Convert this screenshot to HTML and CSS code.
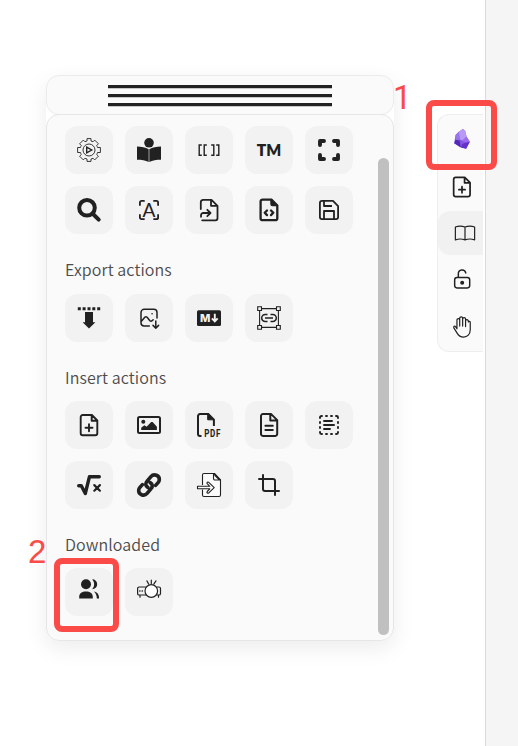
FILE: index.html
```html
<!DOCTYPE html>
<html lang="en">
<head>
<meta charset="utf-8">
<title>Excalidraw tools panel</title>
<link rel="stylesheet" href="styles.css">
</head>
<body>
<main class="canvas">
  <section class="panel">
    <header class="handle"><i></i><i></i><i></i></header>
    <div class="panel-body">
      <div class="sections">
        <div class="grid">
          <button class="tool" aria-label="Run script"><svg viewBox="0 0 24 24" fill="none" stroke="currentColor" stroke-width=".9"><path d="M10 .6h4v2.400q1 .2 2 .8l1.700-1.700 3.700 3.700L19.700 7.500q.6 1 .8 2h2.900v5h-2.900q-.2 1-.8 2l1.700 1.700-3.700 3.700-1.700-1.700q-1 .6-2 .8v2.400h-4V21q-1-.2-2-.8l-1.700 1.700-3.700-3.700 1.700-1.700q-.6-1-.8-2H.6v-5h2.900q.2-1 .8-2L2.600 5.800l3.700-3.700L8 3.800q1-.6 2-.8z"/><circle cx="12" cy="12" r="6"/><path d="m9.700 9.200 5 2.800-5 2.800z" stroke-width="1.400"/></svg></button>
          <button class="tool" aria-label="Reader"><svg viewBox="0 0 24 24"><circle cx="12" cy="4.800" r="4.800"/><path d="M0 8.500c4.500 0 8.500.8 11.700 2.800V24C8.500 22.300 4.500 21.700 0 21.700zM24 8.500c-4.500 0-8.500.8-11.700 2.800V24c3.200-1.700 7.200-2.300 11.700-2.300z"/></svg></button>
          <button class="tool" aria-label="Link brackets"><svg viewBox="0 0 24 24" fill="none" stroke="currentColor" stroke-width="1.400"><path d="M4.800 7H2.200v10.200h2.600M9.800 7H7.200v10.200h2.600M14.200 7h2.600v10.200h-2.600M19.200 7h2.600v10.200h-2.600"/></svg></button>
          <button class="tool" aria-label="Trademark"><svg viewBox="0 0 24 24"><text class="glyph-tm" x="12" y="18" text-anchor="middle" textLength="24.500" lengthAdjust="spacingAndGlyphs">TM</text></svg></button>
          <button class="tool" aria-label="Fullscreen"><svg viewBox="0 0 24 24" fill="none" stroke="currentColor" stroke-width="3.900" stroke-linecap="round" stroke-linejoin="round"><path d="M7 3H3v4M17 3h4v4M3 17v4h4M21 17v4h-4"/></svg></button>
          <button class="tool" aria-label="Search"><svg viewBox="0 0 24 24" fill="none" stroke="currentColor" stroke-width="4" stroke-linecap="round"><circle cx="10" cy="9.800" r="7.800"/><path d="m15.500 15.500 6.200 6.200"/></svg></button>
          <button class="tool" aria-label="Scan text"><svg viewBox="0 0 24 24" fill="none" stroke="currentColor" stroke-width="1.800" stroke-linecap="round"><path d="M7 2.900H4.600a1.700 1.700 0 0 0-1.700 1.700V7M17 2.900h2.400a1.700 1.700 0 0 1 1.700 1.700V7M7 21.100H4.600a1.700 1.700 0 0 1-1.700-1.700V17M17 21.100h2.400a1.700 1.700 0 0 0 1.700-1.700V17"/><text class="glyph-a" x="12" y="18.600" text-anchor="middle">A</text></svg></button>
          <button class="tool" aria-label="Open file"><svg viewBox="0 0 24 24" fill="none" stroke="currentColor" stroke-width="1.800" stroke-linecap="round" stroke-linejoin="round"><path d="M3.800 11V4.200a2.400 2.400 0 0 1 2.400-2.400h8.300l6 6v12.500a2 2 0 0 1-2 2H5.200M14 2v5.800h6M4 18.800v-1.500a2.300 2.300 0 0 1 2.300-2.300H13M10.300 11.800l3.200 3.200-3.200 3.200"/></svg></button>
          <button class="tool" aria-label="Code file"><svg viewBox="0 0 24 24" fill="none" stroke="currentColor" stroke-width="2.300" stroke-linecap="round" stroke-linejoin="round"><path d="M5.600 1.600h8.800l5.900 5.900v12.700a2 2 0 0 1-2 2H5.600a2 2 0 0 1-2-2V3.600a2 2 0 0 1 2-2z"/><path d="M14 1.600v4.500a1.500 1.500 0 0 0 1.500 1.500h4.800z" fill="currentColor" stroke-width="1.500"/><path d="m10 12.500-2.300 2.300 2.300 2.300M14 12.500l2.300 2.300-2.300 2.300"/></svg></button>
          <button class="tool" aria-label="Save"><svg viewBox="0 0 24 24" fill="none" stroke="currentColor" stroke-width="1.800" stroke-linejoin="round"><path d="M5 2.900h11l5.100 5.200V19a2.100 2.100 0 0 1-2.100 2.100H5A2.100 2.100 0 0 1 2.900 19V5A2.100 2.100 0 0 1 5 2.900zM7 3v5h8M7 21v-8h10v8"/></svg></button>
        </div>
        <h2 class="first">Export actions</h2>
        <div class="grid">
          <button class="tool" aria-label="Download"><svg viewBox="0 0 24 24"><path d="M.8 1.300h3v3h-3zM5.600 1.300h3v3h-3zM10.500 1.300h3v3h-3zM15.300 1.300h3v3h-3zM20.200 1.300h3v3h-3zM8 6h8v10.200h2.400L12 22.500l-6.400-6.300H8z"/></svg></button>
          <button class="tool" aria-label="Export image"><svg viewBox="0 0 24 24" fill="none" stroke="currentColor" stroke-width="1.500" stroke-linecap="round" stroke-linejoin="round"><path d="M12.300 20H7.200A3.200 3.200 0 0 1 4 16.800V6.500a3.200 3.200 0 0 1 3.200-3.200h9.600A3.200 3.200 0 0 1 20 6.500V12M4.200 15.600l3.600-4.300q1.100-1.200 2.300 0l2.800 3.400q1 1 2.200 0l1-1M18.800 15v7M16 19.400l2.800 2.800 2.800-2.800"/><path d="M15 7.700h.1"/></svg></button>
          <button class="tool" aria-label="Markdown"><svg viewBox="0 0 24 24"><rect y="4.300" width="24" height="15.600" rx="1.500"/><text class="glyph-md" x="3" y="16">M</text><path d="M17.800 7.800v7M14.900 12.300l2.900 3.100 2.900-3.100" fill="none" stroke="#f2f2f2" stroke-width="1.900"/></svg></button>
          <button class="tool" aria-label="Frame link"><svg viewBox="0 0 24 24" fill="none" stroke="currentColor" stroke-width="1.100"><path d="M4.700 2.600h14.600M4.700 21.400h14.600M2.600 4.700v14.600M21.400 4.700v14.600"/><path d="M.7.700h3.800v3.800H.7zM19.500.7h3.800v3.800h-3.800zM.7 19.500h3.800v3.800H.7zM19.500 19.500h3.800v3.800h-3.800z"/><path d="M10.500 8.500H8.200a3.500 3.500 0 0 0 0 7h2.300M13.500 8.500h2.300a3.500 3.500 0 0 1 0 7h-2.300M8 12h8" stroke-width="1.500"/></svg></button>
        </div>
        <h2>Insert actions</h2>
        <div class="grid">
          <button class="tool" aria-label="New file"><svg viewBox="0 0 24 24" fill="none" stroke="currentColor" stroke-width="1.900" stroke-linecap="round" stroke-linejoin="round"><path d="M5.700 2h9.200l5.400 5.500v12.700a2 2 0 0 1-2 2H5.700a2 2 0 0 1-2-2V4a2 2 0 0 1 2-2zM14.700 2.200v5.500h5.400M12 11.200v7M8.500 14.700h7"/></svg></button>
          <button class="tool" aria-label="Insert image"><svg viewBox="0 0 24 24"><rect x="1" y="4" width="22" height="16" rx="1.500" fill="none" stroke="currentColor" stroke-width="2"/><circle cx="6.300" cy="8.800" r="2"/><path d="M4.200 17v-2.300l3.200-2.400 2.200 1.500 4.600-4.800h1.400l4.300 4.700V17z"/></svg></button>
          <button class="tool" aria-label="Insert PDF"><svg viewBox="0 0 24 24"><path d="M4.500 22.900H3A2 2 0 0 1 1 20.900V3.100A2 2 0 0 1 3 1.100h8.300l5.600 5.600V13" fill="none" stroke="currentColor" stroke-width="2"/><path d="M10.700 1v5.800h6.200z" stroke="currentColor"/><text class="glyph-pdf" x="7.200" y="23.800" textLength="17" lengthAdjust="spacingAndGlyphs">PDF</text></svg></button>
          <button class="tool" aria-label="Insert note"><svg viewBox="0 0 24 24" fill="none" stroke="currentColor" stroke-width="2" stroke-linecap="round" stroke-linejoin="round"><path d="M6 1.100h8.200l6 6v14a1.800 1.800 0 0 1-1.800 1.800H5.800A1.800 1.800 0 0 1 4 21.100V3a1.900 1.900 0 0 1 2-1.900zM13.300 1.300v6.200h6.500M8.400 12.800h7.400M8.400 16.900h7.400"/></svg></button>
          <button class="tool" aria-label="Text selection"><svg viewBox="0 0 24 24" fill="none" stroke="currentColor" stroke-width="1.900" stroke-linecap="round"><path d="M5 3h-.5A1.500 1.500 0 0 0 3 4.500V5M9 3h1M14 3h1M19 3h.5A1.500 1.500 0 0 1 21 4.500V5M21 9v1M21 14v1M21 19v.5a1.500 1.500 0 0 1-1.500 1.500H19M15 21h-1M10 21H9M5 21h-.5A1.500 1.500 0 0 1 3 19.500V19M3 15v-1M3 10V9M7 8h8M7 12h10M7 16h6"/></svg></button>
          <button class="tool" aria-label="Formula"><svg viewBox="0 0 24 24" fill="none" stroke="currentColor" stroke-linecap="round" stroke-linejoin="round"><path d="M1.700 12.800h2.600l4 7.700 4.100-16.700h9.900" stroke-width="3.400"/><path d="m17.300 12.100 5.600 5.600M22.900 12.100l-5.600 5.600" stroke-width="2.200"/></svg></button>
          <button class="tool" aria-label="Insert link"><svg viewBox="0 0 24 24" fill="none" stroke="currentColor" stroke-width="3.600" stroke-linecap="round"><path d="M10.800 14.400c-2.500-1.500-2.700-4.100-.9-6l4-4.800c3.100-3.500 8.800-1.100 8.400 3.200-.1 1.200-.5 2-1.200 2.800l-2.500 2.800M13.200 9.600c2.500 1.500 2.700 4.100.9 6l-4 4.800C7 23.900 1.300 21.500 1.700 17.200c.1-1.200.5-2 1.200-2.800l2.500-2.800"/></svg></button>
          <button class="tool" aria-label="Import file"><svg viewBox="0 0 24 24" fill="none" stroke="currentColor" stroke-width="1.100" stroke-linejoin="round"><path d="M5.500 12V2a1.500 1.500 0 0 1 1.500-1.500h10.500l6 6.300V22a1.500 1.500 0 0 1-1.500 1.500H7A1.500 1.500 0 0 1 5.500 22v-5.500" fill="#fafafa"/><path d="M16.500.7v4.800a1.500 1.500 0 0 0 1.500 1.500h5.300zM17.500 2l5 5"/><path d="M.5 13.300h12.300l-2.600-2.600a1 1 0 0 1 1.600-1.300l5.400 5.200-5.400 5.200a1 1 0 0 1-1.600-1.300l2.600-2.700H.5z" fill="#fafafa"/></svg></button>
          <button class="tool" aria-label="Crop"><svg viewBox="0 0 24 24" fill="none" stroke="currentColor" stroke-width="2" stroke-linecap="round" stroke-linejoin="round"><path d="M6 2v14a2 2 0 0 0 2 2h14M18 22V8a2 2 0 0 0-2-2H2"/></svg></button>
        </div>
        <h2>Downloaded</h2>
        <div class="grid">
          <button class="tool" aria-label="Collaborate"><svg viewBox="0 0 24 24"><circle cx="9" cy="4.200" r="5"/><path d="M2.200 18.500v-1.700c0-3.700 3-5.300 6.800-5.300s6.800 1.600 6.800 5.300v1.700zM15.200-.8a5 5 0 0 1 0 10c1.500-2 1.900-3.300 1.900-5s-.4-3-1.900-5zM16.800 11.600c3.300.5 5.300 2.700 5.300 6.900h-2.300c0-3-1-5.200-3-6.900z"/></svg></button>
          <button class="tool" aria-label="Presentation"><svg viewBox="0 0 24 24" fill="none" stroke="currentColor" stroke-width="1.200" stroke-linecap="round"><path d="M8.500 7H2.200A1.600 1.600 0 0 0 .6 8.600v4.800A1.600 1.600 0 0 0 2.200 15h6.300M3 15v2.200M21.500 15v2.200M20 7h1.900a1.600 1.600 0 0 1 1.600 1.600v4.800a1.600 1.600 0 0 1-1.600 1.600H20"/><circle cx="14.300" cy="11" r="6.300" fill="#fff"/><path d="M14.300 3.500V.2M11.800 4.200 9.900.9M16.800 4.200 19 .9"/><path d="M2.800 11h3.800" stroke-width="1.600" stroke-dasharray=".1 2.300"/></svg></button>
        </div>
      </div>
      <div class="scrollbar"><div class="thumb"></div></div>
    </div>
  </section>
  <nav class="dock">
    <button class="dock-item" aria-label="Obsidian"><svg viewBox="0 0 24 24"><path d="m5 7.500 3.500-3.500L13 1.200l2.500 2 1.500 6.300 3.500 5.500-4 7.500-6.500-1.500-6.500-4.500z" fill="#8355e1"/><path d="m8.500 4 4.500-2.800 2.500 2 1.500 6.300-4.500 4-3-1z" fill="#b799f6"/><path d="m9.500 12.500 3 1 4.500-4 3.500 5.500-5 1z" fill="#9b6dee"/><path d="m3.500 16.500 1.500-4 4.500 1.500 1 7z" fill="#5528b8"/><path d="m12 18 3.500-2 5-1-4 7.500-5.500-1.200z" fill="#6531c9"/><path d="M5 7.500 8.500 4l1 8.500-4.500.5z" fill="#9974ea"/></svg></button>
    <button class="dock-item" aria-label="New drawing"><svg viewBox="0 0 24 24" fill="none" stroke="currentColor" stroke-width="1.900" stroke-linecap="round" stroke-linejoin="round"><path d="M5.200 1.500H15l5.800 5.800v12.900a2.300 2.300 0 0 1-2.300 2.300H5.200a2.300 2.300 0 0 1-2.300-2.300V3.800a2.300 2.300 0 0 1 2.300-2.300zM14.800 1.700v5.700h5.800M12 11.500v6.800M8.600 14.900h6.800"/></svg></button>
    <button class="dock-item active" aria-label="Library"><svg viewBox="0 0 24 24" fill="none" stroke="currentColor" stroke-width="1.300" stroke-linecap="round" stroke-linejoin="round"><path d="M1.500 19.500c3.500-1.300 7-1.300 10.500 0 3.500-1.300 7-1.300 10.500 0v-14c-3.500-1.300-7-1.300-10.500 0-3.500-1.300-7-1.300-10.500 0zM12 5.500v14"/></svg></button>
    <button class="dock-item" aria-label="Lock"><svg viewBox="0 0 24 24" fill="none" stroke="currentColor" stroke-width="1.600" stroke-linecap="round"><rect x="4" y="10.400" width="16.400" height="11.300" rx="2.500"/><path d="M8 10V6.400a4.100 4.100 0 0 1 8.100-1"/><circle cx="12.200" cy="16" r="1.400" fill="currentColor"/></svg></button>
    <button class="dock-item" aria-label="Pan"><svg viewBox="0 0 24 24" fill="none" stroke="currentColor" stroke-width="1.300" stroke-linecap="round" stroke-linejoin="round"><path d="M6.500 14V4.300a1.500 1.500 0 0 1 3 0V11M9.500 11V2.500a1.500 1.500 0 0 1 3.200 0V11M12.700 11V3.300a1.500 1.500 0 0 1 3.200 0V11M15.900 11.500V5.500a1.500 1.500 0 0 1 3 0v1a1.100 1.100 0 0 1 2.100.5V15c0 5-3.200 8-7.200 8-3.600 0-5.600-1.500-7.300-4.600L3.100 13c-.7-1.800.9-2.500 2-1.200l1.400 1.900"/></svg></button>
  </nav>
</main>
<aside class="gutter"></aside>
<div class="mark mark-one"></div>
<span class="num num-one">1</span>
<div class="mark mark-two"></div>
<span class="num num-two">2</span>
</body>
</html>
```
FILE: styles.css
```css
* {
  box-sizing: border-box;
}

body {
  position: relative;
  display: flex;
  width: 518px;
  height: 746px;
  margin: 0;
  overflow: hidden;
  background: #fff;
  color: #212121;
  font-family: "Noto Sans CJK SC", "Noto Sans", sans-serif;
}

.canvas {
  display: flex;
  flex: 1;
  align-items: flex-start;
  justify-content: space-between;
  padding: 75px 2px 0 46px;
}

.panel {
  width: 348px;
  border-radius: 13px;
  box-shadow: 0 7px 22px rgba(0, 0, 0, .08);
}

.handle {
  display: flex;
  flex-direction: column;
  align-items: center;
  gap: 6px;
  height: 40px;
  padding-top: 9px;
  border: 1px solid #ebebeb;
  border-radius: 13px;
  background: #fafafa;
}

.handle i {
  width: 224px;
  height: 3px;
  background: #222;
  box-shadow: 0 1px 0 rgba(0, 0, 0, .2);
}

.panel-body {
  display: flex;
  justify-content: space-between;
  height: 527px;
  margin-top: -1px;
  padding: 11px 4px 5px 18px;
  border: 1px solid #e6e6e6;
  border-radius: 13px;
  background: #fafafa;
}

.grid {
  display: grid;
  grid-template-columns: repeat(5, 48px);
  gap: 12px;
}

h2 {
  height: 59px;
  margin: 0;
  padding-top: 23px;
  font-size: 16px;
  font-weight: 350;
  line-height: 24px;
  letter-spacing: .1px;
  color: #4c4c4c;
}

h2.first {
  height: 60px;
}

button {
  display: flex;
  align-items: center;
  justify-content: center;
  padding: 0;
  border: 0;
  background: none;
  color: inherit;
}

.tool {
  height: 48px;
  border-radius: 12px;
  background: #f2f2f2;
}

svg {
  display: block;
  width: 24px;
  height: 24px;
  fill: currentColor;
  overflow: visible;
}

svg[fill="none"] {
  fill: none;
}

svg text {
  stroke: none;
  fill: currentColor;
}

.glyph-tm {
  font: 800 17px Lato, sans-serif;
}

.glyph-a {
  font: 400 19px Lato, sans-serif;
}

svg .glyph-md {
  font: 800 11px Inter, sans-serif;
  fill: #f2f2f2;
}

.glyph-pdf {
  font: 700 11px Roboto, sans-serif;
  letter-spacing: 1px;
}

.scrollbar {
  display: flex;
  width: 11px;
  padding-top: 32px;
}

.thumb {
  flex: 1;
  border-radius: 6px;
  background: #c0c0c0;
}

.dock {
  width: 46px;
  height: 238px;
  margin-top: 39px;
  border: 1px solid #eee;
  border-right: 0;
  border-radius: 12px 0 0 12px;
  background: #fafafa;
}

.dock-item {
  width: 100%;
  height: 48px;
}

.dock-item svg {
  width: 22px;
  height: 22px;
  margin-right: -3px;
}

.dock-item.active {
  height: 44px;
  padding-left: 5px;
  border-radius: 12px 0 0 12px;
  background: #f1f1f1;
}

.gutter {
  width: 33px;
  border-left: 1px solid #dadada;
  background: #f5f5f5;
}

.mark {
  position: absolute;
  border: 6px solid #fa4b48;
  border-radius: 8px;
}

.mark-one {
  top: 100px;
  left: 426px;
  width: 71px;
  height: 70px;
}

.mark-two {
  top: 558px;
  left: 54px;
  width: 65px;
  height: 74px;
}

.num {
  position: absolute;
  color: #fa4b48;
  font: 33px/36px "Liberation Sans", sans-serif;
}

.num-one {
  top: 80px;
  left: 393px;
  font-family: Roboto, sans-serif;
}

.num-two {
  top: 534px;
  left: 28px;
}
```
